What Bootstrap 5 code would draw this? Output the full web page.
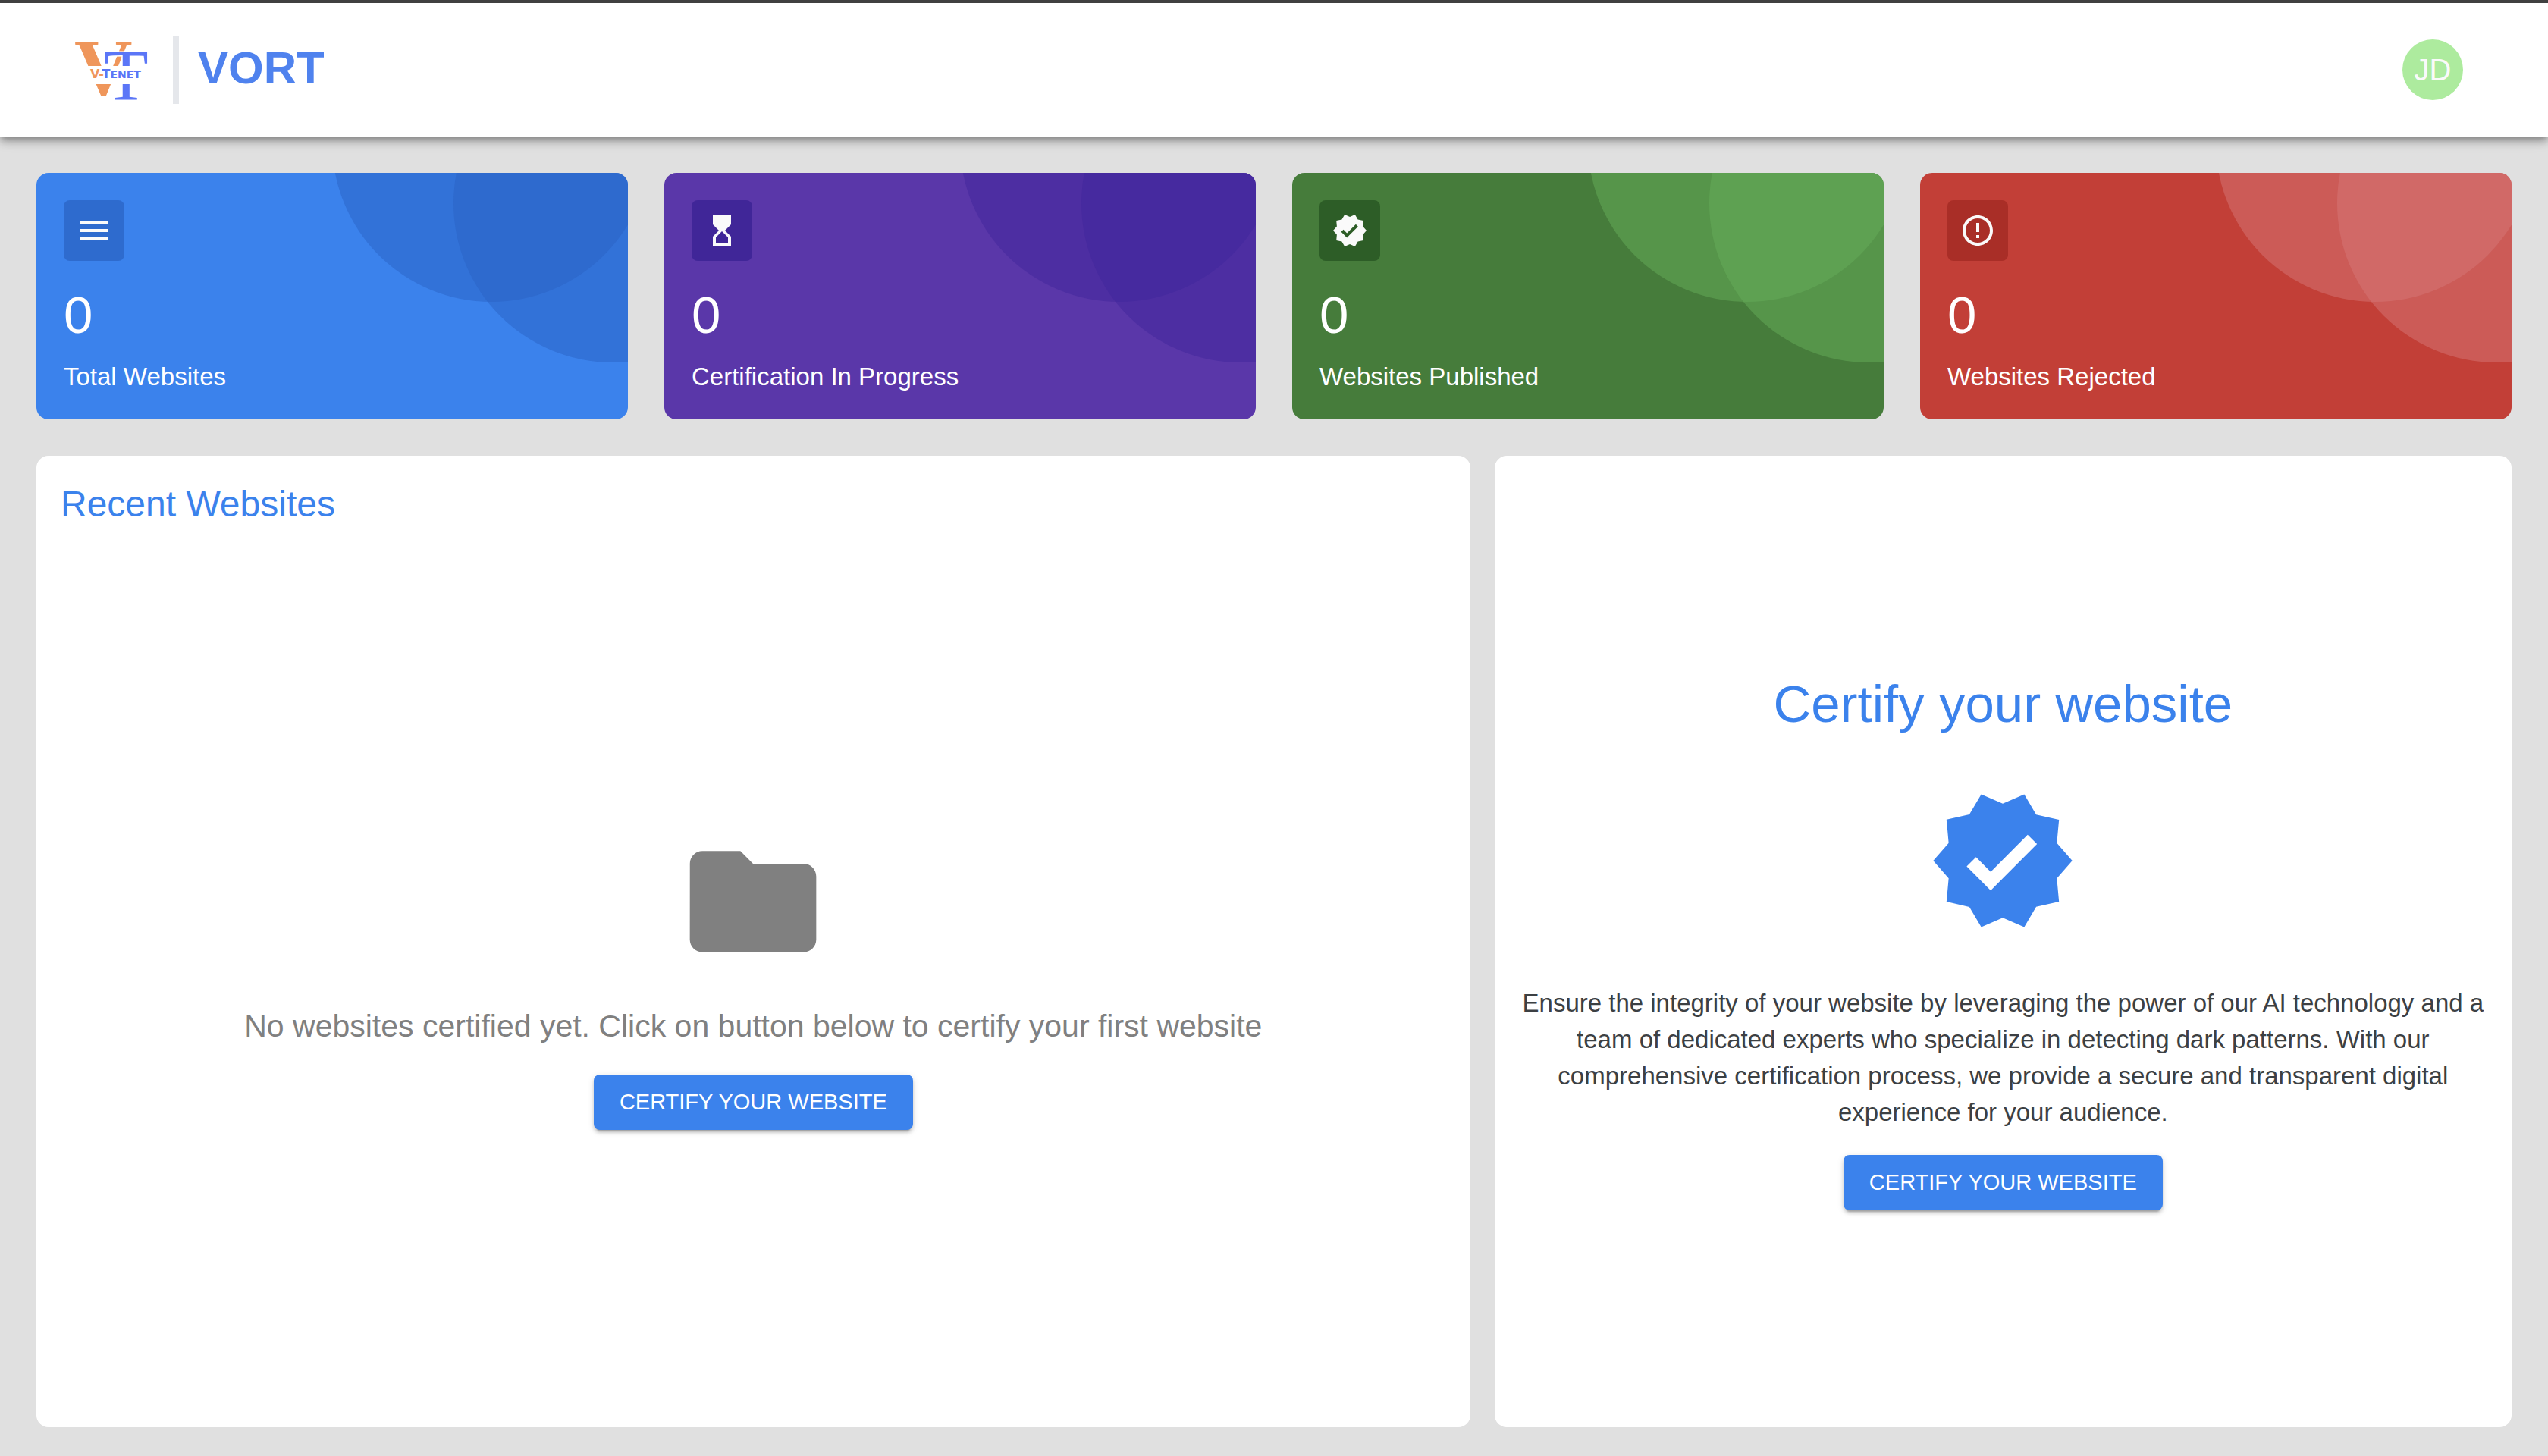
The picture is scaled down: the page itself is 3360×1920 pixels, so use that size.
<!DOCTYPE html>
<html lang="en">
<head>
<meta charset="utf-8">
<meta name="viewport" content="width=device-width, initial-scale=1">
<title>VORT Dashboard</title>
<link href="https://cdn.jsdelivr.net/npm/bootstrap@5.3.0/dist/css/bootstrap.min.css" rel="stylesheet">
<style>
  body { font-family: "Liberation Sans", Arial, sans-serif; font-size: 33px; line-height: 48px; background: #e0e0e0; color: #3c4043; }
  .topbar { height: 180px; padding: 0 112px 0 96px; background: #fff; border-top: 4px solid #404040; box-shadow: 0 4px 8px -2px rgba(0,0,0,.3), 0 8px 10px rgba(0,0,0,.16), 0 2px 20px rgba(0,0,0,.14); }
  .brand-logo { width: 100px; height: 90px; }
  .brand-rule { width: 8px; height: 90px; background: #e5e7eb; margin-left: 32px; margin-right: 25px; }
  .brand-name { font-size: 60px; line-height: 84px; padding-bottom: 4px; color: #4f82ee; }
  .avatar { width: 80px; height: 80px; background: #adeb9e; color: #fafafa; font-size: 40px; line-height: 40px; }
  .page { padding: 48px 48px 38px; gap: 48px; }
  .stats { --bs-gutter-x: 48px; --bs-gutter-y: 48px; }
  .panels { --bs-gutter-x: 32px; --bs-gutter-y: 32px; }
  .stat, .panel { border-radius: 16px; }
  .stat { padding: 36px; background: var(--tone); color: #fff; }
  .stat::before, .stat::after { content: ""; position: absolute; width: 420px; height: 420px; border-radius: 50%; background: var(--bubble); opacity: .5; }
  .stat::before { top: -250px; right: -30px; }
  .stat::after { top: -170px; right: -190px; }
  .stat-icon { width: 80px; height: 80px; border-radius: 8px; background: var(--chip); }
  .stat-icon svg { width: 48px; height: 48px; }
  .stat-value { font-size: 69px; line-height: 84px; margin-top: 30px; margin-bottom: 18px; }
  .stat-label { line-height: 41px; }
  .tone-blue { --tone: #3b82ec; --bubble: #2962c4; --chip: #2e6bce; }
  .tone-purple { --tone: #5a37a9; --bubble: #3f259b; --chip: #402698; }
  .tone-green { --tone: #467c3b; --bubble: #66ad5a; --chip: #2d5d27; }
  .tone-red { --tone: #c23f37; --bubble: #d57777; --chip: #a92e27; }
  .panel { background: #fff; }
  .ink { color: #3b82ec; }
  .panel-title { font-size: 48px; line-height: 64px; }
  .hero-title { font-size: 69px; line-height: 84px; }
  .gap-lg { gap: 64px; }
  .gap-md { gap: 32px; }
  .pad { padding: 32px; }
  .big-icon { width: 200px; height: 200px; }
  .empty { color: #808080; }
  .empty-text { font-size: 41px; line-height: 64px; }
  .btn-certify { --bs-btn-bg: #3b82ec; --bs-btn-color: #fff; --bs-btn-hover-bg: #2e6bce; --bs-btn-hover-color: #fff; --bs-btn-border-width: 0; --bs-btn-font-size: 29px; --bs-btn-line-height: 49px; --bs-btn-padding-y: 12px; --bs-btn-padding-x: 34px; --bs-btn-border-radius: 8px; box-shadow: 0 6px 2px -4px rgba(0,0,0,.2), 0 4px 4px rgba(0,0,0,.14), 0 2px 10px rgba(0,0,0,.12); }
</style>
</head>
<body class="d-flex flex-column min-vh-100">
<header class="topbar d-flex align-items-center justify-content-between">
  <a href="#" class="d-flex align-items-center text-decoration-none">
    <svg class="brand-logo" viewBox="0 0 100 90" role="img" aria-label="V-Tenet">
      <text x="2" y="77" font-family="Liberation Serif, serif" font-weight="700" font-size="106" fill="#ef965b">V</text>
      <text x="41" y="85" font-family="Liberation Serif, serif" font-size="96" fill="#5b76f7" stroke="#fff" stroke-width="3" paint-order="stroke">T</text>
      <rect x="0" y="40" width="100" height="24" fill="#fff"/>
      <text x="23" y="56" font-family="DejaVu Sans, sans-serif" font-weight="700" font-size="16" fill="#ef965b">V-<tspan fill="#5b76f7">T<tspan font-size="14">ENET</tspan></tspan></text>
    </svg>
    <span class="brand-rule"></span>
    <span class="brand-name fw-bold">VORT</span>
  </a>
  <button type="button" class="avatar btn rounded-circle border-0 p-0 d-flex align-items-center justify-content-center" aria-label="Account">JD</button>
</header>

<main class="page flex-grow-1 d-flex flex-column">
  <section class="stats row row-cols-4 gy-0">
    <div class="col"><div class="stat tone-blue position-relative overflow-hidden">
      <div class="stat-icon d-flex align-items-center justify-content-center"><svg viewBox="0 0 24 24" fill="#fafafa"><path d="M3 18h18v-2H3v2zm0-5h18v-2H3v2zm0-7v2h18V6H3z"/></svg></div>
      <div class="stat-value">0</div><div class="stat-label">Total Websites</div>
    </div></div>
    <div class="col"><div class="stat tone-purple position-relative overflow-hidden">
      <div class="stat-icon d-flex align-items-center justify-content-center"><svg viewBox="0 0 24 24" fill="#fafafa"><path d="m18 22-.01-6L14 12l3.99-4.01L18 2H6v6l4 4-4 3.990V22h12zM8 16.500l4-4 4 4V20H8v-3.500z"/></svg></div>
      <div class="stat-value">0</div><div class="stat-label">Certification In Progress</div>
    </div></div>
    <div class="col"><div class="stat tone-green position-relative overflow-hidden">
      <div class="stat-icon d-flex align-items-center justify-content-center"><svg viewBox="0 0 24 24" fill="#fafafa"><path d="m23 12-2.440-2.790.340-3.690-3.610-.820-1.890-3.200L12 2.960 8.600 1.500 6.710 4.690 3.100 5.500l.340 3.700L1 12l2.440 2.790-.340 3.700 3.610.820L8.600 22.500l3.400-1.470 3.400 1.460 1.890-3.190 3.610-.820-.340-3.690L23 12zm-12.910 4.720-3.800-3.810 1.480-1.480 2.320 2.330 5.850-5.870 1.480 1.480-7.330 7.350z"/></svg></div>
      <div class="stat-value">0</div><div class="stat-label">Websites Published</div>
    </div></div>
    <div class="col"><div class="stat tone-red position-relative overflow-hidden">
      <div class="stat-icon d-flex align-items-center justify-content-center"><svg viewBox="0 0 24 24" fill="#fafafa"><path d="M11 15h2v2h-2zm0-8h2v6h-2zm.990-5C6.470 2 2 6.480 2 12s4.470 10 9.990 10C17.520 22 22 17.520 22 12S17.520 2 11.990 2zM12 20c-4.420 0-8-3.580-8-8s3.580-8 8-8 8 3.580 8 8-3.580 8-8 8z"/></svg></div>
      <div class="stat-value">0</div><div class="stat-label">Websites Rejected</div>
    </div></div>
  </section>

  <section class="panels row flex-grow-1 gy-0">
    <div class="col-7 d-flex"><div class="panel pad pb-0 flex-grow-1 d-flex flex-column">
      <h2 class="panel-title ink fw-normal m-0">Recent Websites</h2>
      <div class="empty gap-md flex-grow-1 d-flex flex-column align-items-center justify-content-center text-center">
        <svg class="big-icon" viewBox="0 0 24 24" fill="currentColor"><path d="M10 4H4c-1.100 0-1.990.900-1.990 2L2 18c0 1.100.900 2 2 2h16c1.100 0 2-.900 2-2V8c0-1.100-.900-2-2-2h-8l-2-2z"/></svg>
        <p class="empty-text m-0">No websites certified yet. Click on button below to certify your first website</p>
        <button type="button" class="btn btn-certify text-uppercase">Certify your website</button>
      </div>
    </div></div>
    <div class="col-5 d-flex"><div class="panel pad flex-grow-1 d-flex flex-column align-items-center justify-content-center text-center gap-md">
      <div class="d-flex flex-column align-items-center gap-lg">
        <h2 class="hero-title ink fw-normal m-0">Certify your website</h2>
        <svg class="big-icon ink" viewBox="0 0 24 24" fill="currentColor"><path d="m23 12-2.440-2.790.340-3.690-3.610-.820-1.890-3.200L12 2.960 8.600 1.500 6.710 4.690 3.100 5.500l.340 3.700L1 12l2.440 2.790-.340 3.700 3.610.820L8.600 22.500l3.400-1.470 3.400 1.460 1.890-3.190 3.610-.820-.340-3.690L23 12zm-12.910 4.720-3.800-3.810 1.480-1.480 2.320 2.330 5.850-5.870 1.480 1.480-7.330 7.350z"/></svg>
        <p class="m-0">Ensure the integrity of your website by leveraging the power of our AI technology and a team of dedicated experts who specialize in detecting dark patterns. With our comprehensive certification process, we provide a secure and transparent digital experience for your audience.</p>
      </div>
      <button type="button" class="btn btn-certify text-uppercase">Certify your website</button>
    </div></div>
  </section>
</main>
<script src="https://cdn.jsdelivr.net/npm/bootstrap@5.3.0/dist/js/bootstrap.bundle.min.js"></script>
</body>
</html>
